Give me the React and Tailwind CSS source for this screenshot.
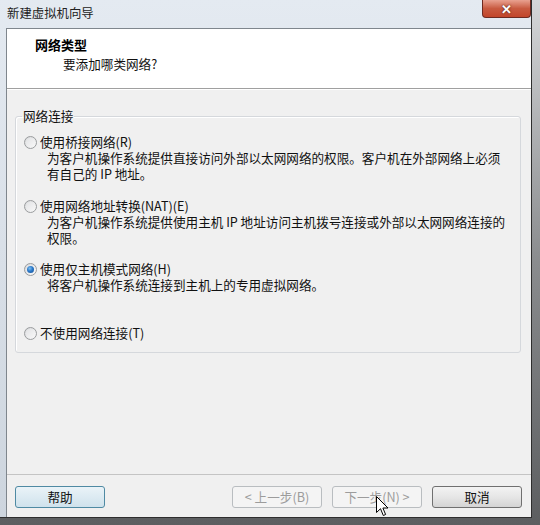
import React from "react";

function Radio({ checked }) {
  return (
    <span className="relative flex h-[13px] w-[13px] shrink-0 items-center justify-center rounded-full border border-[#9a9c9e] bg-gradient-to-br from-[#d6d8da] to-[#fbfbfb]">
      <span className="h-[9px] w-[9px] rounded-full bg-gradient-to-br from-[#e2e3e5] to-[#f7f7f7]" />
      {checked && (
        <span className="absolute h-[7px] w-[7px] rounded-full bg-[radial-gradient(circle_at_40%_35%,#7fc0f0_0%,#2a78c8_45%,#154f93_100%)]" />
      )}
    </span>
  );
}

function Option({ checked, label, lines }) {
  return (
    <div>
      <div className="flex items-center gap-[3px] pl-[8px] leading-[16px]">
        <Radio checked={checked} />
        <span>{label}</span>
      </div>
      {lines && (
        <div className="pl-[31px] leading-[16px]">
          {lines.map((l, i) => (
            <div key={i}>{l}</div>
          ))}
        </div>
      )}
    </div>
  );
}

function Btn({ children, kind }) {
  const cls =
    kind === "focus"
      ? "border-[#4f8aa3] bg-gradient-to-b from-[#eaf3f8] to-[#cfe2ec] text-[#111]"
      : kind === "disabled"
      ? "border-[#b9bdc0] bg-[#f4f4f4] text-[#9c9c9c]"
      : "border-[#707070] bg-gradient-to-b from-[#f3f3f3] via-[#e6e6e6] to-[#d4d4d4] text-[#111]";
  return (
    <div
      className={
        "flex h-[22px] w-[90px] items-center justify-center rounded-[3px] border text-[12.6px] " +
        cls
      }
    >
      {children}
    </div>
  );
}

export default function App() {
  return (
    <div
      className="relative h-[525px] w-[540px] overflow-hidden bg-gradient-to-b from-[#d4d6d8] via-[#8a8c8e] to-[#5c5e60] text-[12.6px] text-[#111]"
      style={{ fontFamily: '"Noto Sans CJK SC", "Noto Sans", sans-serif' }}
    >
      <div className="flex h-[518px] w-[532px] flex-col border-b border-r border-[#2e2e2e] bg-gradient-to-b from-[#e4eaf1] to-[#cdd5de]">
        {/* title bar */}
        <div className="relative h-[28px] shrink-0">
          <div className="pl-[7px] pt-[4px] text-[12.4px] leading-[18px] text-[#222]">
            新建虚拟机向导
          </div>
          <div className="absolute right-0 top-0 flex h-[18px] w-[49px] items-center justify-center rounded-b-[4px] border border-t-0 border-[#6e2a20] bg-gradient-to-b from-[#e8a190] via-[#c85a40] to-[#c2452a]">
            <span className="text-[13px] font-bold leading-none text-white [text-shadow:0_0_2px_#3a1208]">
              ✕
            </span>
          </div>
        </div>

        {/* body */}
        <div className="flex min-h-0 flex-1 pl-[6px]">
          <div className="flex flex-1 flex-col border-l border-t border-[#7f868d] bg-[#f0f0f0]">
            {/* header */}
            <div className="h-[60px] shrink-0 border-b border-[#a0a0a0] bg-white">
              <div className="pl-[28px] pt-[8px] text-[13px] font-bold leading-[16px] text-black">
                网络类型
              </div>
              <div className="pl-[56px] pt-[3px] leading-[16px]">
                要添加哪类网络?
              </div>
            </div>
            <div className="h-px bg-white" />

            {/* group box */}
            <fieldset className="ml-[8px] mr-[10px] mt-[18px] rounded-[3px] border border-[#d5d8dc] px-0 pb-[11px] shadow-[inset_1px_1px_0_#ffffff]">
              <legend className="ml-[6px] px-[1px] leading-[16px]">网络连接</legend>
              <div className="mt-[10px]">
                <Option
                  label="使用桥接网络(R)"
                  lines={[
                    "为客户机操作系统提供直接访问外部以太网网络的权限。客户机在外部网络上必须",
                    "有自己的 IP 地址。",
                  ]}
                />
              </div>
              <div className="mt-[16px]">
                <Option
                  label="使用网络地址转换(NAT)(E)"
                  lines={[
                    "为客户机操作系统提供使用主机 IP 地址访问主机拨号连接或外部以太网网络连接的",
                    "权限。",
                  ]}
                />
              </div>
              <div className="mt-[15px]">
                <Option
                  checked
                  label="使用仅主机模式网络(H)"
                  lines={["将客户机操作系统连接到主机上的专用虚拟网络。"]}
                />
              </div>
              <div className="mt-[32px]">
                <Option label="不使用网络连接(T)" />
              </div>
            </fieldset>

            {/* footer */}
            <div className="mt-auto border-t border-[#c4c4c4] pb-[9px] pt-[11px]">
              <div className="flex items-center pl-[8px] pr-[9px]">
                <Btn kind="focus">帮助</Btn>
                <div className="flex-1" />
                <div className="flex gap-[10px]">
                  <Btn kind="disabled">&lt; 上一步(B)</Btn>
                  <Btn kind="disabled">下一步(N) &gt;</Btn>
                  <Btn>取消</Btn>
                </div>
              </div>
            </div>
          </div>
        </div>
      </div>

      {/* mouse cursor */}
      <svg
        className="absolute left-[376px] top-[496px]"
        width="13"
        height="21"
        viewBox="0 0 13 21"
      >
        <path
          d="M0.5 0.5 L0.5 16.5 L4.5 12.7 L7.3 19.5 L9.6 18.5 L6.9 12 L12 12 Z"
          fill="#fff"
          stroke="#000"
          strokeWidth="1"
          strokeLinejoin="round"
        />
      </svg>
    </div>
  );
}
